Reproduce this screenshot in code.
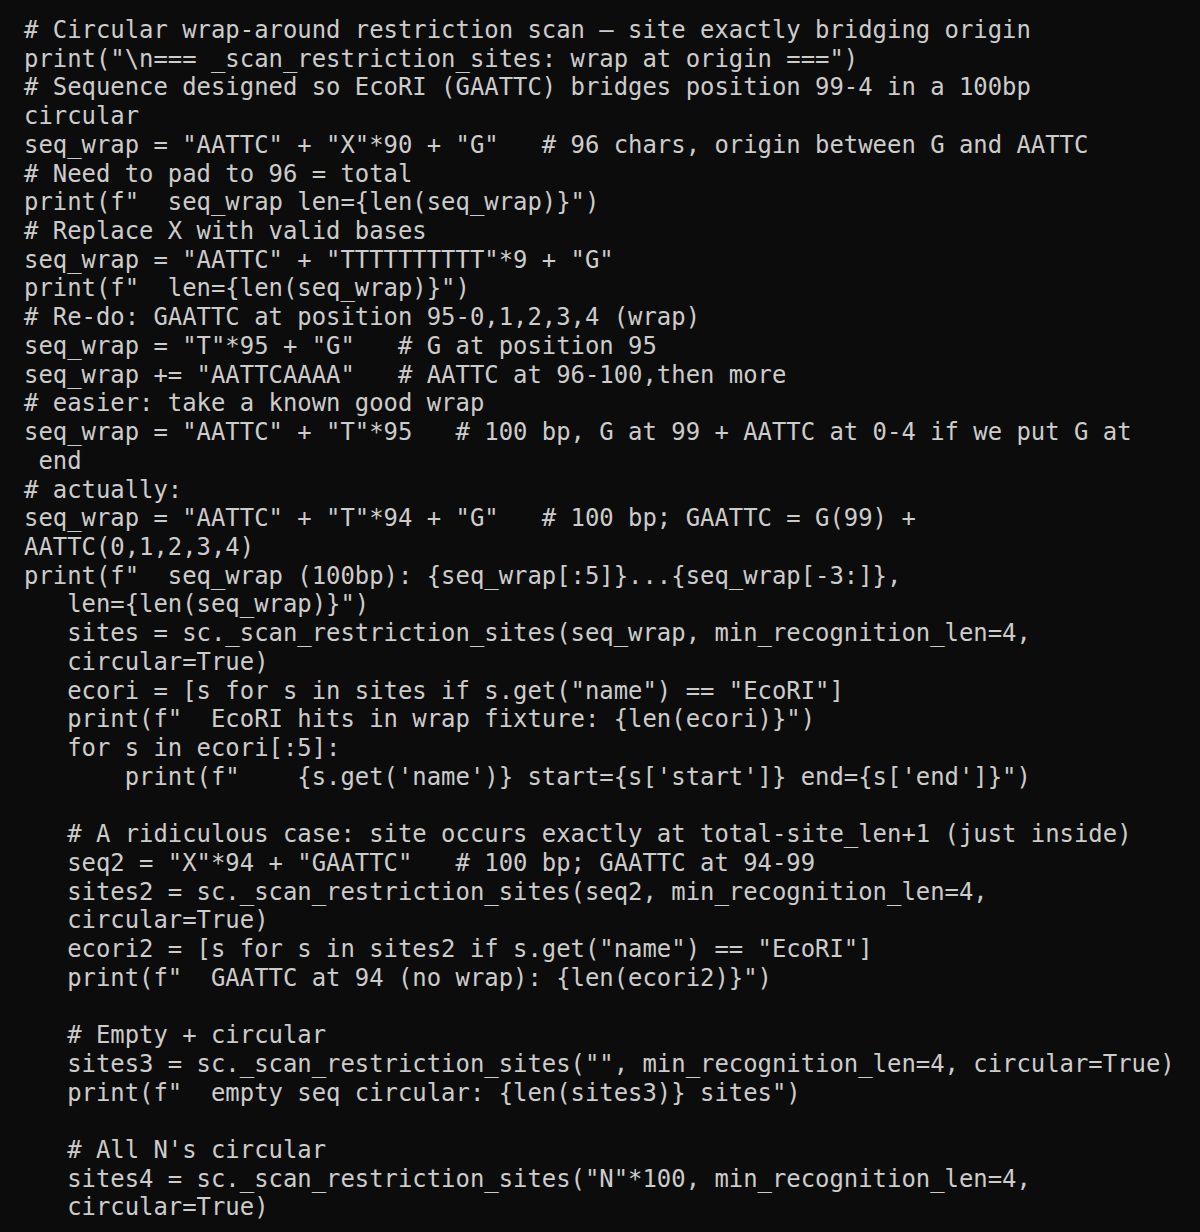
const lines: string[] = [
  "# Circular wrap-around restriction scan – site exactly bridging origin",
  'print("\\n=== _scan_restriction_sites: wrap at origin ===")',
  "# Sequence designed so EcoRI (GAATTC) bridges position 99-4 in a 100bp",
  "circular",
  'seq_wrap = "AATTC" + "X"*90 + "G"   # 96 chars, origin between G and AATTC',
  "# Need to pad to 96 = total",
  'print(f"  seq_wrap len={len(seq_wrap)}")',
  "# Replace X with valid bases",
  'seq_wrap = "AATTC" + "TTTTTTTTTT"*9 + "G"',
  'print(f"  len={len(seq_wrap)}")',
  "# Re-do: GAATTC at position 95-0,1,2,3,4 (wrap)",
  'seq_wrap = "T"*95 + "G"   # G at position 95',
  'seq_wrap += "AATTCAAAA"   # AATTC at 96-100,then more',
  "# easier: take a known good wrap",
  'seq_wrap = "AATTC" + "T"*95   # 100 bp, G at 99 + AATTC at 0-4 if we put G at',
  " end",
  "# actually:",
  'seq_wrap = "AATTC" + "T"*94 + "G"   # 100 bp; GAATTC = G(99) +',
  "AATTC(0,1,2,3,4)",
  'print(f"  seq_wrap (100bp): {seq_wrap[:5]}...{seq_wrap[-3:]},',
  '   len={len(seq_wrap)}")',
  "   sites = sc._scan_restriction_sites(seq_wrap, min_recognition_len=4,",
  "   circular=True)",
  '   ecori = [s for s in sites if s.get("name") == "EcoRI"]',
  '   print(f"  EcoRI hits in wrap fixture: {len(ecori)}")',
  "   for s in ecori[:5]:",
  "       print(f\"    {s.get('name')} start={s['start']} end={s['end']}\")",
  "",
  "   # A ridiculous case: site occurs exactly at total-site_len+1 (just inside)",
  '   seq2 = "X"*94 + "GAATTC"   # 100 bp; GAATTC at 94-99',
  "   sites2 = sc._scan_restriction_sites(seq2, min_recognition_len=4,",
  "   circular=True)",
  '   ecori2 = [s for s in sites2 if s.get("name") == "EcoRI"]',
  '   print(f"  GAATTC at 94 (no wrap): {len(ecori2)}")',
  "",
  "   # Empty + circular",
  '   sites3 = sc._scan_restriction_sites("", min_recognition_len=4, circular=True)',
  '   print(f"  empty seq circular: {len(sites3)} sites")',
  "",
  "   # All N's circular",
  '   sites4 = sc._scan_restriction_sites("N"*100, min_recognition_len=4,',
  "   circular=True)",
];

export default function App() {
  return (
    <div className="w-[1200px] h-[1232px] overflow-hidden bg-[#0c0c0c] pl-[24px] pt-[16px] text-[#cccccc] font-['DejaVu_Sans_Mono',monospace] text-[23.9px] leading-[28.72px]">
      {lines.map((l, i) => (
        <div key={i} className="whitespace-pre h-[28.72px]">
          {l}
        </div>
      ))}
    </div>
  );
}
